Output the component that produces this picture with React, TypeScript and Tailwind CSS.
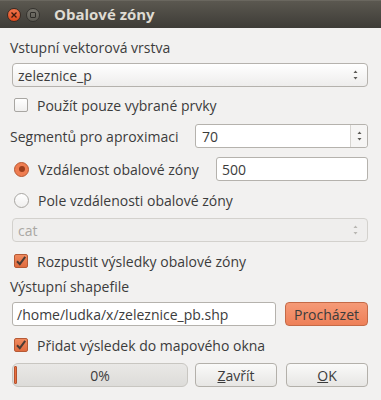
import React from 'react';

const font = { fontFamily: '"Open Sans", "Noto Sans", sans-serif' };

function Arrows({ faded }: { faded?: boolean }) {
  const c = faded ? '#b8b6b2' : '#5a5854';
  return (
    <svg width="7" height="14" viewBox="0 0 7 14">
      <path d="M3.5 2.5 L5.5 5 L1.5 5 Z" fill={c} />
      <path d="M3.5 11.5 L5.5 9 L1.5 9 Z" fill={c} />
    </svg>
  );
}

function CheckBox({ checked }: { checked?: boolean }) {
  if (checked) {
    return (
      <div className="w-[14px] h-[14px] rounded-[2px] border border-[#b65a35] bg-gradient-to-b from-[#f08a5e] to-[#e06b3e] flex items-center justify-center">
        <svg width="12" height="12" viewBox="0 0 12 12">
          <path d="M2 6.2 L4.8 9.2 L10.2 1.8" stroke="#4a3b34" strokeWidth="2" fill="none" />
        </svg>
      </div>
    );
  }
  return (
    <div className="w-[14px] h-[14px] rounded-[2px] border border-[#a8a6a2] bg-gradient-to-b from-[#ffffff] to-[#f0efee]" />
  );
}

function Radio({ checked }: { checked?: boolean }) {
  if (checked) {
    return (
      <div className="w-[15px] h-[15px] rounded-full border border-[#b85a34] bg-[#ef7d51] flex items-center justify-center">
        <div className="w-[6px] h-[6px] rounded-full bg-[#9a3d1c]" />
      </div>
    );
  }
  return <div className="w-[15px] h-[15px] rounded-full border border-[#a8a6a2] bg-gradient-to-b from-[#ffffff] to-[#f0efee]" />;
}

export default function App() {
  return (
    <div className="w-[381px] h-[400px] bg-[#f2f1f0] text-[14px] text-[#3c3c3c] overflow-hidden" style={font}>
      <div className="h-[28px] flex items-center bg-gradient-to-b from-[#5b5850] to-[#3e3c37] border-t border-[#6a675f]">
        <div className="ml-[7px] w-[14px] h-[14px] rounded-full bg-gradient-to-b from-[#f2744a] to-[#dc4a1c] border border-[#3a2a22] flex items-center justify-center">
          <svg width="6" height="6" viewBox="0 0 6 6">
            <path d="M0.5 0.5 L5.5 5.5 M5.5 0.5 L0.5 5.5" stroke="#3a1a0e" strokeWidth="1.3" />
          </svg>
        </div>
        <div className="ml-[5px] w-[14px] h-[14px] rounded-full bg-gradient-to-b from-[#77746c] to-[#5c5a53] border border-[#35332f] flex items-center justify-center">
          <div className="w-[6px] h-[6px] border border-[#2e2c28] rounded-[1px]" />
        </div>
        <span className="ml-[14px] font-bold text-[15px] text-[#dfdbd2]">Obalové zóny</span>
      </div>

      <div className="pl-[10px] pr-[13px]">
        <div className="mt-[9px] h-[20px] flex items-center">Vstupní vektorová vrstva</div>

        <div className="mt-[6px] ml-[2px] h-[24px] rounded-[4px] border border-[#b5b2ad] bg-gradient-to-b from-[#ffffff] to-[#eeedec] flex items-center justify-between pl-[5px] pr-[8px]">
          <span>zeleznice_p</span>
          <Arrows />
        </div>

        <div className="mt-[8px] h-[20px] flex items-center pl-[4px] gap-[9px]">
          <CheckBox />
          <span>Použít pouze vybrané prvky</span>
        </div>

        <div className="mt-[9px] h-[24px] flex items-center">
          <span className="w-[185px]">Segmentů pro aproximaci</span>
          <div className="flex-1 h-[24px] rounded-[3px] border border-[#b5b2ad] bg-white flex items-center">
            <span className="flex-1 pl-[6px]">70</span>
            <div className="w-[17px] h-full border-l border-[#d6d4d0] bg-[#f6f5f4] rounded-r-[3px] flex items-center justify-center">
              <Arrows />
            </div>
          </div>
        </div>

        <div className="mt-[9px] h-[24px] flex items-center">
          <div className="pl-[4px] w-[206px] flex items-center gap-[9px]">
            <Radio checked />
            <span>Vzdálenost obalové zóny</span>
          </div>
          <div className="flex-1 h-[24px] rounded-[3px] border border-[#b5b2ad] bg-white flex items-center pl-[5px]">500</div>
        </div>

        <div className="mt-[9px] h-[20px] flex items-center pl-[4px] gap-[9px]">
          <Radio />
          <span>Pole vzdálenosti obalové zóny</span>
        </div>

        <div className="mt-[8px] ml-[2px] h-[24px] rounded-[4px] border border-[#d3d1cd] bg-[#efeeed] flex items-center justify-between pl-[5px] pr-[8px] text-[#aaa8a4]">
          <span>cat</span>
          <Arrows faded />
        </div>

        <div className="mt-[9px] h-[20px] flex items-center pl-[4px] gap-[9px]">
          <CheckBox checked />
          <span>Rozpustit výsledky obalové zóny</span>
        </div>

        <div className="mt-[5px] h-[20px] flex items-center">Výstupní shapefile</div>

        <div className="mt-[6px] ml-[2px] h-[24px] flex items-center gap-[9px]">
          <div className="flex-1 h-full rounded-[3px] border border-[#b5b2ad] bg-white flex items-center pl-[4px]">/home/ludka/x/zeleznice_pb.shp</div>
          <div className="w-[83px] h-full rounded-[4px] border border-[#c46a47] bg-gradient-to-b from-[#f59a77] to-[#ee8058] flex items-center justify-center">Procházet</div>
        </div>

        <div className="mt-[9px] h-[20px] flex items-center pl-[4px] gap-[9px]">
          <CheckBox checked />
          <span>Přidat výsledek do mapového okna</span>
        </div>

        <div className="mt-[8px] ml-[2px] h-[24px] flex items-center">
          <div className="w-[176px] h-full rounded-[6px] border border-[#c8c6c1] bg-gradient-to-b from-[#e9e8e6] to-[#dddcd9] flex items-center relative">
            <div className="absolute left-[1px] top-[2px] bottom-[2px] w-[3px] rounded-[1px] bg-[#e9703f] border border-[#b55330]" />
            <span className="flex-1 text-center">0%</span>
          </div>
          <div className="ml-[7px] w-[82px] h-full rounded-[4px] border border-[#b3b0aa] bg-gradient-to-b from-[#fafaf9] to-[#e7e6e4] flex items-center justify-center">
            <span><span className="underline">Z</span>avřít</span>
          </div>
          <div className="ml-[9px] flex-1 h-full rounded-[4px] border border-[#b3b0aa] bg-gradient-to-b from-[#fafaf9] to-[#e7e6e4] flex items-center justify-center">
            <span><span className="underline">O</span>K</span>
          </div>
        </div>
      </div>
    </div>
  );
}
